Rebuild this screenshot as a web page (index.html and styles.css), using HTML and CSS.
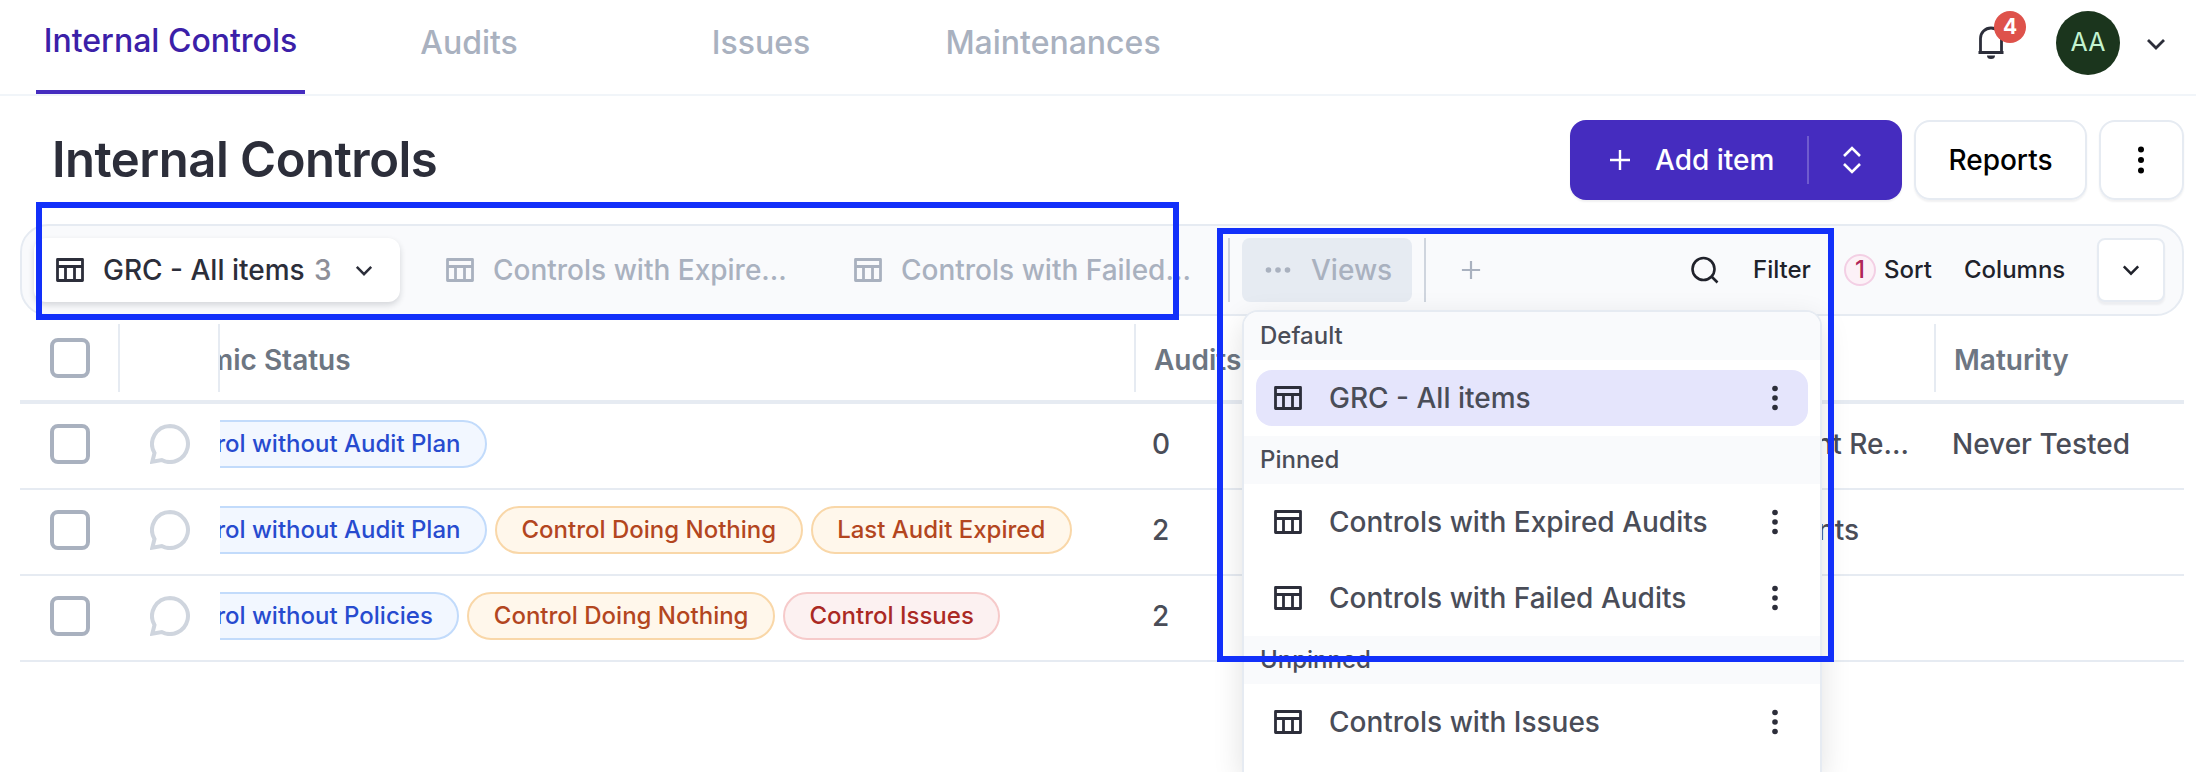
FILE: index.html
```
<!DOCTYPE html>
<html lang="en">
<head>
<meta charset="utf-8">
<title>Internal Controls</title>
<link rel="stylesheet" href="styles.css">
</head>
<body>
<svg class="defs" width="0" height="0">
  <symbol id="table" viewBox="0 0 28 24"><path d="M1.500 1.500h25v21h-25zM1.500 8.500h25M9.500 8.500v14M18.500 8.500v14" fill="none" stroke="currentColor" stroke-width="2.800" stroke-linejoin="round"/></symbol>
  <symbol id="chevron" viewBox="0 0 20 12"><path d="M2 2l8 8 8-8" fill="none" stroke="currentColor" stroke-width="2.800"/></symbol>
  <symbol id="dots" viewBox="0 0 6 26"><g fill="currentColor"><circle cx="3" cy="3.500" r="2.800"/><circle cx="3" cy="13" r="2.800"/><circle cx="3" cy="22.500" r="2.800"/></g></symbol>
  <symbol id="plus" viewBox="0 0 22 22"><path d="M11 1v20M1 11h20" fill="none" stroke="currentColor" stroke-width="2.400"/></symbol>
  <symbol id="comment" viewBox="0 0 40 40"><path d="M20 2a18 18 0 1 1-8.300 34L2.300 37.700 4.500 29A18 18 0 0 1 20 2z" fill="none" stroke="currentColor" stroke-width="4"/></symbol>
</svg>

<header class="topbar">
  <nav class="nav">
    <a class="nav-item active">Internal Controls</a>
    <a class="nav-item">Audits</a>
    <a class="nav-item">Issues</a>
    <a class="nav-item">Maintenances</a>
  </nav>
  <div class="account">
    <div class="bell">
      <svg width="28" height="34" viewBox="0 0 28 34"><path d="M3.500 26V12.500a10.500 10.500 0 0 1 21 0V26M1.500 26.500h25" fill="none" stroke="#2c2e3a" stroke-width="2.800"/><path d="M10 29.500h8a4 3.500 0 0 1-8 0z" fill="#2c2e3a"/></svg>
      <span class="bell-count">4</span>
    </div>
    <div class="avatar">AA</div>
    <svg class="account-chevron" width="20" height="12"><use href="#chevron"/></svg>
  </div>
</header>

<section class="titlebar">
  <h1>Internal Controls</h1>
  <div class="actions">
    <div class="btn primary">
      <div class="add"><svg width="22" height="22"><use href="#plus"/></svg><span>Add item</span></div>
      <div class="split"><svg width="20" height="28" viewBox="0 0 20 28"><path d="M2 10l8-8 8 8M2 18l8 8 8-8" fill="none" stroke="currentColor" stroke-width="2.600"/></svg></div>
    </div>
    <div class="btn reports">Reports</div>
    <div class="btn more"><svg width="6" height="28" viewBox="0 0 6 28"><circle cx="3" cy="3.500" r="3"/><circle cx="3" cy="14" r="3"/><circle cx="3" cy="24.500" r="3"/></svg></div>
  </div>
</section>

<section class="toolbar">
  <div class="view current"><svg width="28" height="24"><use href="#table"/></svg><span class="view-name">GRC - All items</span><span class="count">3</span><svg class="view-chevron" width="18" height="11"><use href="#chevron"/></svg></div>
  <div class="view second"><svg width="28" height="24"><use href="#table"/></svg><span class="view-name">Controls with Expire...</span></div>
  <div class="view third"><svg width="28" height="24"><use href="#table"/></svg><span class="view-name">Controls with Failed...</span></div>
  <div class="views">
    <div class="views-btn"><svg width="26" height="6" viewBox="0 0 26 6"><g fill="currentColor"><circle cx="3.500" cy="3" r="2.800"/><circle cx="13" cy="3" r="2.800"/><circle cx="22.500" cy="3" r="2.800"/></g></svg><span>Views</span></div>
    <div class="menu">
      <div class="menu-head first">Default</div>
      <div class="menu-list">
        <div class="menu-item selected"><svg width="28" height="24"><use href="#table"/></svg><span>GRC - All items</span><svg class="dots" width="6" height="26"><use href="#dots"/></svg></div>
      </div>
      <div class="menu-head">Pinned</div>
      <div class="menu-list">
        <div class="menu-item"><svg width="28" height="24"><use href="#table"/></svg><span>Controls with Expired Audits</span><svg class="dots" width="6" height="26"><use href="#dots"/></svg></div>
        <div class="menu-item"><svg width="28" height="24"><use href="#table"/></svg><span>Controls with Failed Audits</span><svg class="dots" width="6" height="26"><use href="#dots"/></svg></div>
      </div>
      <div class="menu-head">Unpinned</div>
      <div class="menu-list">
        <div class="menu-item"><svg width="28" height="24"><use href="#table"/></svg><span>Controls with Issues</span><svg class="dots" width="6" height="26"><use href="#dots"/></svg></div>
      </div>
    </div>
  </div>
  <svg class="add-view" width="20" height="20"><use href="#plus" width="20" height="20"/></svg>
  <div class="tools">
    <svg class="search" width="28" height="28" viewBox="0 0 28 28"><path d="M12.500 2a11 11 0 1 0 0 22a11 11 0 1 0 0-22M20.500 20.500l6 6" fill="none" stroke="currentColor" stroke-width="2.600"/></svg>
    <span class="filter">Filter</span>
    <span class="sort-count">1</span>
    <span class="sort">Sort</span>
    <span class="columns">Columns</span>
    <div class="expand"><svg width="18" height="12"><use href="#chevron"/></svg></div>
  </div>
</section>

<main class="grid">
  <div class="row head">
    <div class="cell tick"><i class="box"></i></div>
    <div class="cell talk"></div>
    <div class="cell status"><span>mic Status</span></div>
    <div class="cell audits">Audits</div>
    <div class="cell kind"></div>
    <div class="cell maturity">Maturity</div>
  </div>
  <div class="row">
    <div class="cell tick"><i class="box"></i></div>
    <div class="cell talk"><svg width="40" height="40"><use href="#comment"/></svg></div>
    <div class="cell status"><span class="chip blue">Control without Audit Plan</span></div>
    <div class="cell audits">0</div>
    <div class="cell kind">nt Re...</div>
    <div class="cell maturity">Never Tested</div>
  </div>
  <div class="row">
    <div class="cell tick"><i class="box"></i></div>
    <div class="cell talk"><svg width="40" height="40"><use href="#comment"/></svg></div>
    <div class="cell status"><span class="chip blue">Control without Audit Plan</span><span class="chip amber">Control Doing Nothing</span><span class="chip amber">Last Audit Expired</span></div>
    <div class="cell audits">2</div>
    <div class="cell kind short">nts</div>
    <div class="cell maturity"></div>
  </div>
  <div class="row">
    <div class="cell tick"><i class="box"></i></div>
    <div class="cell talk"><svg width="40" height="40"><use href="#comment"/></svg></div>
    <div class="cell status"><span class="chip blue">Control without Policies</span><span class="chip amber">Control Doing Nothing</span><span class="chip red">Control Issues</span></div>
    <div class="cell audits">2</div>
    <div class="cell kind"></div>
    <div class="cell maturity"></div>
  </div>
</main>

<div class="mark mark-tabs"></div>
<div class="mark mark-menu"></div>
</body>
</html>
```
FILE: styles.css
```
* { box-sizing: border-box; }
html, body { height: 772px; overflow: hidden; }
body {
  margin: 0;
  position: relative;
  background: #fff;
  color: #2c2e3a;
  font: 500 28px/34px Inter, "Liberation Sans", sans-serif;
  white-space: nowrap;
}
svg { display: block; flex: none; }
.defs { position: absolute; }

/* Top navigation */
.topbar {
  display: flex;
  justify-content: space-between;
  height: 96px;
  padding-left: 36px;
  border-bottom: 2px solid #f1f5f9;
}
.nav { display: flex; }
.nav-item {
  width: 292px;
  padding-top: 23px;
  text-align: center;
  font-size: 32px;
  line-height: 40px;
  color: #a9b1bf;
}
.nav-item.active {
  width: 269px;
  margin-right: 18px;
  padding-top: 21px;
  color: #3b20a8;
  border-bottom: 4px solid #452cbf;
}
.account { display: flex; padding: 11px 30px 0 0; }
.bell { position: relative; width: 28px; padding-top: 15px; margin-right: 51px; }
.bell-count {
  position: absolute;
  left: 17px;
  top: 0;
  width: 32px;
  height: 32px;
  border-radius: 50%;
  background: #de524b;
  color: #fff;
  font-size: 21px;
  font-weight: 700;
  line-height: 31px;
  text-align: center;
}
.avatar {
  width: 64px;
  height: 64px;
  border-radius: 50%;
  background: #1b351d;
  color: #c3f3cf;
  font-size: 25px;
  font-weight: 400;
  line-height: 63px;
  text-align: center;
}
.account-chevron { margin: 27px 0 0 26px; }

/* Page title */
.titlebar {
  display: flex;
  justify-content: space-between;
  height: 128px;
  padding: 24px 12px 0 52px;
}
h1 { margin: 10px 0 0; font-size: 49px; font-weight: 600; line-height: 60px; letter-spacing: -0.5px; }
.actions { display: flex; gap: 12px; }
.btn {
  display: flex;
  align-items: center;
  justify-content: center;
  height: 80px;
  border: 2px solid #e6ebf2;
  border-radius: 16px;
  box-shadow: 0 2px 2px rgba(20, 25, 40, .06);
  color: #000;
}
.primary { width: 332px; border: 0; background: #452cbf; color: #fff; }
.add {
  display: flex;
  align-items: center;
  gap: 24px;
  width: 239px;
  height: 48px;
  padding-left: 39px;
  border-right: 2px solid #6f5bce;
}
.split { display: flex; justify-content: center; width: 93px; padding-right: 8px; }
.reports { width: 173px; }
.more { width: 85px; padding-right: 1px; }

/* View tabs and table tools */
.toolbar {
  position: relative;
  z-index: 2;
  display: flex;
  align-items: center;
  height: 92px;
  margin: 0 12px 0 20px;
  padding-left: 12px;
  border: 2px solid #e6ebf2;
  border-radius: 28px;
  background: #f9fafc;
}
.view { display: flex; align-items: center; height: 64px; color: #a9b1bf; }
.view-name { margin-left: 18px; }
.current {
  width: 366px;
  padding-left: 22px;
  border-radius: 12px;
  background: #fff;
  color: #2c2e3a;
  box-shadow: 0 3px 6px rgba(20, 25, 40, .16);
}
.current .view-name { width: 211px; margin-left: 19px; }
.count { color: #8e8f98; width: 41px; }
.second { width: 408px; padding-left: 46px; }
.third { width: 420px; padding-left: 46px; }
.second .view-name, .third .view-name { margin-left: 19px; }
.views {
  position: relative;
  height: 64px;
  padding: 0 12px;
  border: solid #cfd5de;
  border-width: 0 2px;
}
.views-btn {
  display: flex;
  align-items: center;
  gap: 20px;
  width: 170px;
  height: 64px;
  padding-left: 23px;
  border-radius: 8px;
  background: #e6ebf2;
  color: #a9b1bf;
}
.add-view { margin-left: 35px; color: #a9b1bf; }
.tools { display: flex; align-items: center; margin-left: auto; padding-right: 17px; font-size: 24px; color: #20222b; }
.filter { width: 91px; margin-left: 34px; }
.sort-count {
  width: 32px;
  height: 32px;
  border: 2px solid #f3cfe4;
  border-radius: 50%;
  background: #fcf1f7;
  color: #b02558;
  line-height: 28px;
  text-align: center;
}
.sort { width: 80px; margin-left: 8px; }
.columns { width: 133px; }
.expand {
  display: flex;
  align-items: center;
  justify-content: center;
  width: 68px;
  height: 64px;
  border: 2px solid #e6ebf2;
  border-radius: 8px;
  background: #fff;
  box-shadow: 0 3px 2px rgba(20, 25, 40, .05);
}

/* Views menu */
.menu {
  position: absolute;
  left: 12px;
  top: 72px;
  width: 580px;
  height: 462px;
  border: 2px solid #e6ebf2;
  border-bottom: 0;
  border-radius: 16px 16px 0 0;
  background: #fff;
  color: #4a4d58;
  box-shadow: 0 10px 30px rgba(0, 0, 0, .12);
}
.menu-head { height: 48px; padding-left: 16px; background: #f9fafc; font-size: 24px; line-height: 47px; }
.menu-head.first { border-radius: 14px 14px 0 0; }
.menu-list { display: grid; gap: 20px; padding: 10px 12px; }
.menu-item { display: flex; align-items: center; height: 56px; padding: 0 30px 0 18px; border-radius: 16px; }
.menu-item > svg { color: #2c2e3a; }
.menu-item > span { margin-left: 27px; }
.menu-item.selected { background: #e5e5fc; }
.menu-item .dots { margin-left: auto; }

/* Table */
.grid { margin: 0 12px 0 20px; color: #4a4d58; }
.row {
  display: grid;
  grid-template-columns: 100px 100px 916px 680px 120px 1fr;
  height: 86px;
  border-bottom: 2px solid #e6ebf2;
}
.cell { display: flex; align-items: center; height: 80px; min-width: 0; }
.head { height: 88px; padding-top: 8px; border-bottom-width: 4px; color: #6d7682; font-weight: 600; }
.head .cell { height: 68px; border-right: 2px solid #e6ebf2; }
.head .audits, .head .maturity { border-right: 0; padding-top: 3px; }
.tick { padding-left: 30px; }
.box { width: 40px; height: 40px; border: 4px solid #a9b1bf; border-radius: 8px; }
.talk { padding-left: 30px; color: #cfd5de; }
.status { gap: 8px; overflow: hidden; }
.head .status { padding-top: 3px; }
.head .status span { margin-left: -12px; }
.audits { padding-left: 16px; }
.head .audits { padding-left: 18px; }
.kind { justify-content: flex-end; padding-right: 27px; }
.kind.short { padding-right: 77px; }
.maturity { padding-left: 16px; }
.head .maturity { padding-left: 18px; }
.chip {
  flex: none;
  height: 48px;
  padding: 0 24.5px;
  border: 2px solid;
  border-radius: 24px;
  font-size: 24px;
  line-height: 43px;
}
.blue { margin-left: -85px; background: #f2f7ff; border-color: #c2dbfb; color: #274bcf; }
.amber { background: #fff7eb; border-color: #f9d7a8; color: #b3461f; }
.red { background: #fcf1f1; border-color: #f6caca; color: #aa2924; }

/* Highlight frames */
.mark { position: absolute; z-index: 3; border: 6px solid #1230fa; }
.mark-tabs { left: 36px; top: 202px; width: 1143px; height: 118px; }
.mark-menu { left: 1217px; top: 227.500px; width: 617px; height: 434.500px; }
```
